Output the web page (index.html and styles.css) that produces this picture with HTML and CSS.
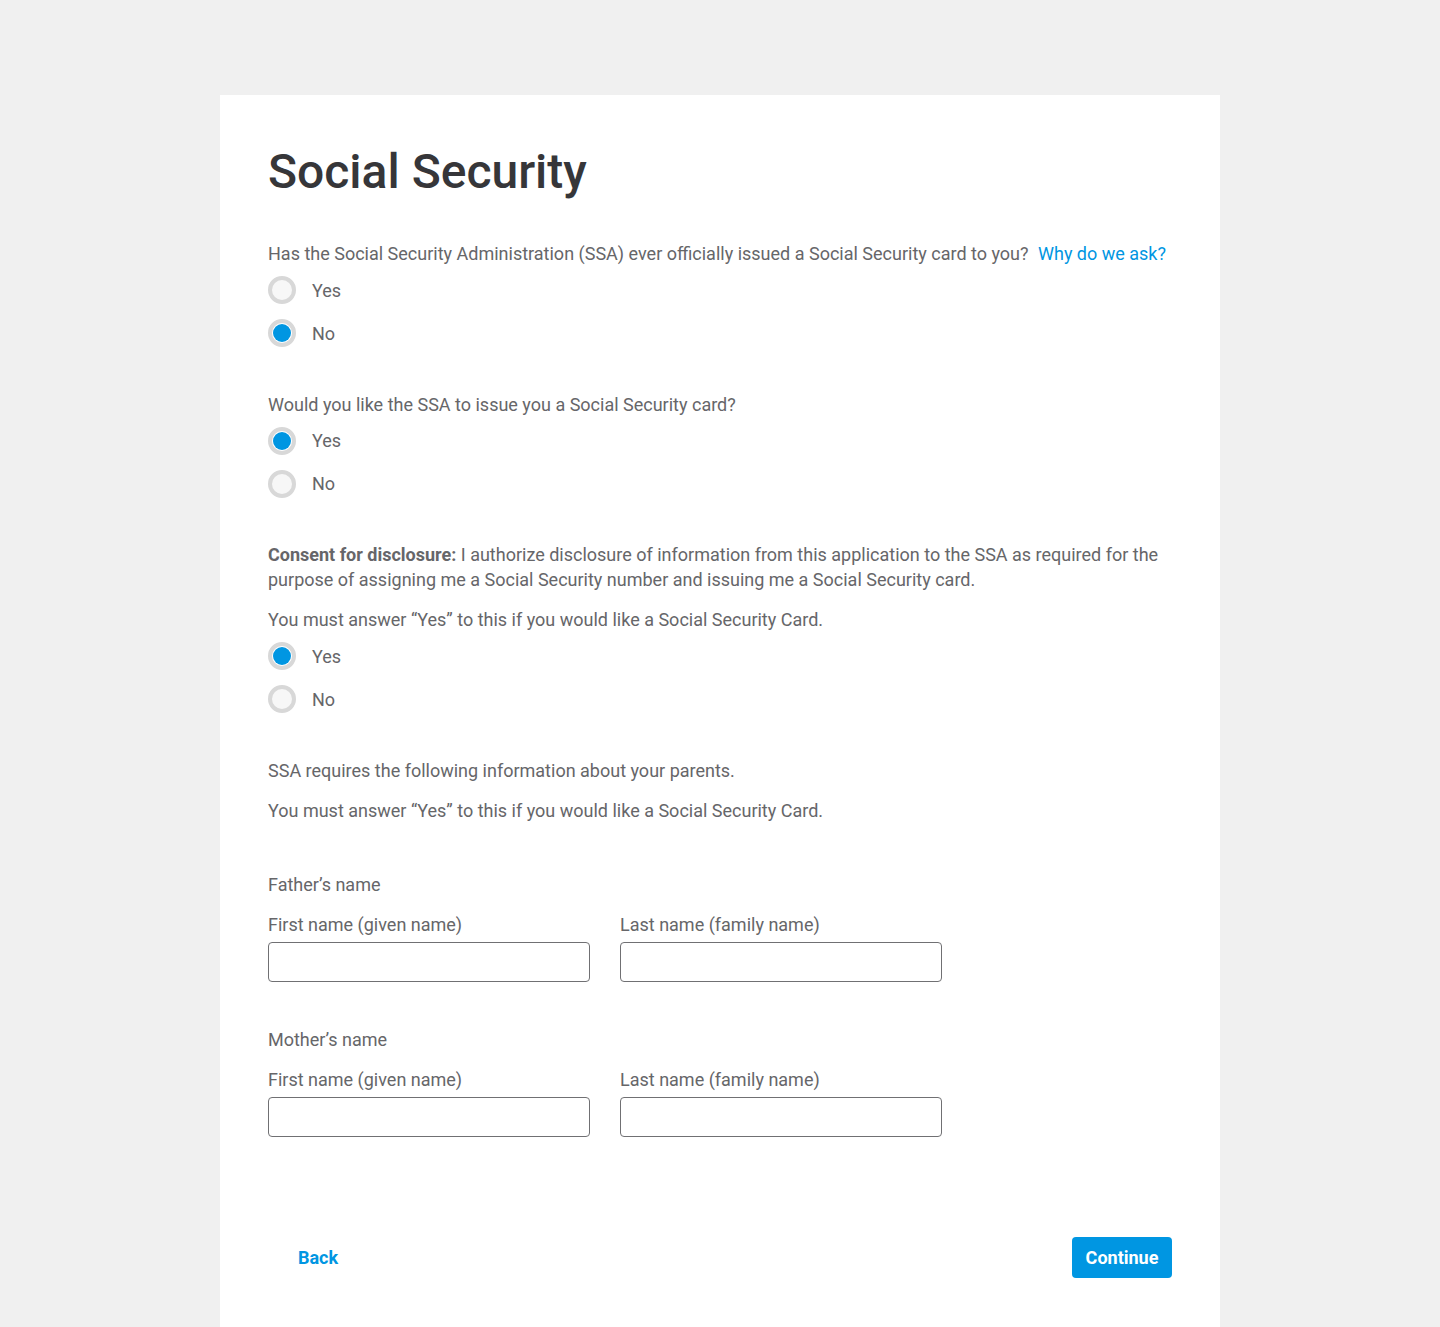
FILE: index.html
```html
<!DOCTYPE html>
<html lang="en">
<head>
<meta charset="utf-8">
<title>Social Security</title>
<link rel="stylesheet" href="styles.css">
</head>
<body>
<main class="card">
  <h1 class="title">Social Security</h1>

  <section class="group">
    <p class="text">Has the Social Security Administration (SSA) ever officially issued a Social Security card to you? <a class="link" href="#">Why do we ask?</a></p>
    <div class="radios">
      <label class="radio"><span class="dot"></span><span>Yes</span></label>
      <label class="radio"><span class="dot on"></span><span>No</span></label>
    </div>
  </section>

  <section class="group">
    <p class="text">Would you like the SSA to issue you a Social Security card?</p>
    <div class="radios">
      <label class="radio"><span class="dot on"></span><span>Yes</span></label>
      <label class="radio"><span class="dot"></span><span>No</span></label>
    </div>
  </section>

  <section class="group">
    <p class="text"><strong>Consent for disclosure:</strong> I authorize disclosure of information from this application to the SSA as required for the purpose of assigning me a Social Security number and issuing me a Social Security card.</p>
    <p class="text para">You must answer “Yes” to this if you would like a Social Security Card.</p>
    <div class="radios">
      <label class="radio"><span class="dot on"></span><span>Yes</span></label>
      <label class="radio"><span class="dot"></span><span>No</span></label>
    </div>
  </section>

  <section class="group">
    <p class="text">SSA requires the following information about your parents.</p>
    <p class="text para">You must answer “Yes” to this if you would like a Social Security Card.</p>
  </section>

  <section class="names first">
    <p class="text">Father’s name</p>
    <div class="fields">
      <div class="field">
        <span class="text">First name (given name)</span>
        <span class="input"></span>
      </div>
      <div class="field">
        <span class="text">Last name (family name)</span>
        <span class="input"></span>
      </div>
    </div>
  </section>

  <section class="names">
    <p class="text">Mother’s name</p>
    <div class="fields">
      <div class="field">
        <span class="text">First name (given name)</span>
        <span class="input"></span>
      </div>
      <div class="field">
        <span class="text">Last name (family name)</span>
        <span class="input"></span>
      </div>
    </div>
  </section>

  <footer class="actions">
    <button class="btn back">Back</button>
    <button class="btn primary">Continue</button>
  </footer>
</main>
</body>
</html>
```

FILE: styles.css
```css
* { box-sizing: border-box; }
html, body { margin: 0; padding: 0; }
body {
  background: #f0f0f0;
  font-family: Roboto, "Noto Sans", "Liberation Sans", sans-serif;
  color: #666669;
}
.card {
  width: 1000px;
  margin: 95px auto 0;
  background: #fff;
  padding: 49px 48px 49px;
}
.title {
  margin: 0;
  font-size: 48px;
  line-height: 56px;
  font-weight: 500;
  color: #363639;
}
.text {
  margin: 0;
  font-size: 18px;
  line-height: 25px;
  display: block;
}
.text strong { font-weight: 700; }
.link { color: #0096e2; text-decoration: none; margin-left: 5px; }
.group { margin-top: 41px; }
.group + .group { margin-top: 44.5px; }
.para { margin-top: 15px; }
.radios {
  display: flex;
  flex-direction: column;
  gap: 15px;
  margin-top: 10px;
}
.radio {
  display: flex;
  align-items: center;
  gap: 16px;
  font-size: 18px;
  line-height: 25px;
  height: 28px;
}
.dot {
  width: 28px;
  height: 28px;
  border-radius: 50%;
  border: 4px solid #d8d8d8;
  background: #f7f7f7;
  display: flex;
  align-items: center;
  justify-content: center;
}
.dot.on { background: #fff; }
.dot.on::after {
  content: "";
  width: 18px;
  height: 18px;
  border-radius: 50%;
  background: #0096e2;
}
.names { margin-top: 45px; }
.names.first { margin-top: 49px; }
.fields {
  display: flex;
  gap: 30px;
  margin-top: 15px;
}
.field {
  display: flex;
  flex-direction: column;
  gap: 5px;
  width: 322px;
}
.input {
  display: block;
  height: 40px;
  border: 1px solid #707073;
  border-radius: 4px;
  background: #fff;
}
.actions {
  display: flex;
  justify-content: space-between;
  margin-top: 100px;
}
.btn {
  width: 100px;
  height: 41px;
  border: 0;
  border-radius: 4px;
  font-family: Roboto, "Noto Sans", "Liberation Sans", sans-serif;
  font-size: 18px;
  font-weight: 700;
  cursor: pointer;
  padding: 0;
}
.back { background: transparent; color: #0096e2; }
.primary { background: #0096e2; color: #fff; }
```
